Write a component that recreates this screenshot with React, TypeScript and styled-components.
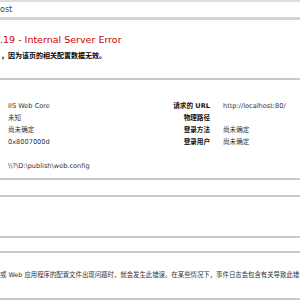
import { createGlobalStyle, styled } from 'styled-components'

const GlobalStyle = createGlobalStyle`
  html, body {
    margin: 0;
    padding: 0;
    background: #fff;
    overflow: hidden;
  }
  body {
    font-family: "DejaVu Sans", "Noto Sans CJK SC", sans-serif;
    color: #333;
  }
`

const leftRows = ['IIS Web Core', '未知', '尚未确定', '0x8007000d', '', '\\\\?\\D:\\publish\\web.config']

const rightRows = [
  { label: '请求的 URL', value: 'http://localhost:80/' },
  { label: '物理路径', value: '' },
  { label: '登录方法', value: '尚未确定' },
  { label: '登录用户', value: '尚未确定' },
]

const App = () => {
  return (
    <Page>
      <GlobalStyle />
      <AddressBar>ost</AddressBar>
      <Header>
        <Title>.19 - Internal Server Error</Title>
        <Subtitle>，因为该页的相关配置数据无效。</Subtitle>
      </Header>

      <Panel $pad="20px 0 6px 8px">
        <Columns>
          <LeftTable>
            {leftRows.map((r, i) => (
              <Cell key={i}>{r || '\u00a0'}</Cell>
            ))}
          </LeftTable>
          <RightTable>
            {rightRows.map((r) => (
              <Row key={r.label}>
                <Label>{r.label}</Label>
                <Cell>{r.value || '\u00a0'}</Cell>
              </Row>
            ))}
          </RightTable>
        </Columns>
      </Panel>

      <Panel $pad="0" $gap={15} $height={39} />

      <Panel $pad="17px 0 18px 0" $gap={13}>
        <Note>或 Web 应用程序的配置文件出现问题时，就会发生此错误。在某些情况下，事件日志会包含有关导致此错误的更多信息。</Note>
      </Panel>
    </Page>
  )
}

const Page = styled.div`
  width: 300px;
  height: 300px;
  overflow: hidden;
`

const AddressBar = styled.div`
  height: 15px;
  border-top: 2px solid #dedede;
  border-bottom: 3px solid #d4d4d4;
  display: flex;
  align-items: center;
  font-size: 8px;
  color: #444;
  white-space: nowrap;
`

const Header = styled.div`
  padding-top: 14px;
  padding-bottom: 17px;
`

const Title = styled.h2`
  margin: 0;
  font-size: 9.5px;
  line-height: 12px;
  font-weight: normal;
  color: #cc0000;
  white-space: nowrap;
`

const Subtitle = styled.h3`
  margin: 5px 0 0 1px;
  font-size: 7px;
  line-height: 10px;
  font-weight: bold;
  color: #000;
  white-space: nowrap;
`

const Panel = styled.div<{ $pad: string; $gap?: number; $height?: number }>`
  margin-top: ${(p) => p.$gap ?? 0}px;
  padding: ${(p) => p.$pad};
  height: ${(p) => (p.$height ? `${p.$height}px` : 'auto')};
  border-top: 2px solid #c9c9c9;
  border-bottom: 2px solid #c9c9c9;
  overflow: hidden;
`

const Columns = styled.div`
  display: flex;
`

const LeftTable = styled.div`
  width: 150px;
  display: flex;
  flex-direction: column;
`

const RightTable = styled.div`
  display: flex;
  flex-direction: column;
`

const Row = styled.div`
  display: flex;
  gap: 13px;
`

const Cell = styled.div`
  font-size: 6.6px;
  line-height: 12px;
  color: #333;
  white-space: nowrap;
`

const Label = styled.div`
  width: 52px;
  text-align: right;
  font-size: 6.6px;
  line-height: 12px;
  font-weight: bold;
  color: #111;
  white-space: nowrap;
`

const Note = styled.div`
  font-size: 6.4px;
  line-height: 10px;
  color: #333;
  white-space: nowrap;
`

export default App
